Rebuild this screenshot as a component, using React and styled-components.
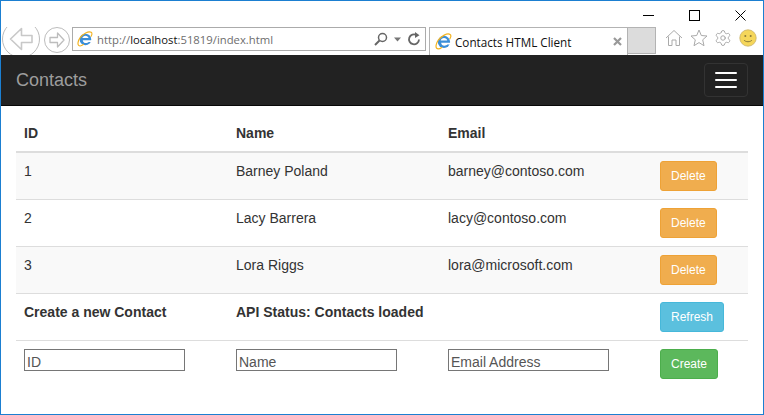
import React from "react";
import styled, { createGlobalStyle } from "styled-components";
import { Settings } from "lucide-react";

const Global = createGlobalStyle`
  html, body { margin: 0; padding: 0; background: #fff; }
  * { box-sizing: border-box; }
`;

const Frame = styled.div`
  width: 764px;
  height: 415px;
  border: 1px solid #1b7fd1;
  background: #fff;
  font-family: "Liberation Sans", Arial, sans-serif;
  font-size: 14px;
  line-height: 20px;
  color: #333;
  overflow: hidden;
  display: flex;
  flex-direction: column;
`;

const Caption = styled.div`
  height: 26px;
  flex: none;
  display: flex;
  justify-content: flex-end;
`;

const CaptionButton = styled.div`
  width: 46px;
  height: 26px;
  padding-top: 2px;
  display: flex;
  align-items: center;
  justify-content: center;
  svg { display: block; }
`;

const Toolbar = styled.div`
  height: 28px;
  flex: none;
  display: flex;
  align-items: flex-start;
  overflow: hidden;
`;

const NavRound = styled.div`
  flex: none;
  border-radius: 50%;
  border: 1px solid #bcbcbc;
  display: flex;
  align-items: center;
  justify-content: center;
  width: ${(p) => p.$size}px;
  height: ${(p) => p.$size}px;
  margin: ${(p) => p.$margin};
  background: #fff;
`;

const AddressBar = styled.div`
  flex: none;
  width: 354px;
  height: 24px;
  margin-left: 2px;
  border: 1px solid #ababab;
  display: flex;
  align-items: center;
  padding: 0 0 0 4px;
  font-size: 11.3px;
  color: #6d6d6d;
  font-family: "Open Sans", "Liberation Sans", sans-serif;
`;

const Url = styled.span`
  margin-left: 4px;
  padding-top: 2px;
  flex: 1;
  b { font-weight: 400; color: #111; }
`;

const AddressIcons = styled.div`
  display: flex;
  align-items: center;
  gap: 6px;
  padding-right: 4px;
`;

const Tab = styled.div`
  flex: none;
  width: 199px;
  height: 28px;
  margin-left: 3px;
  border: 1px solid #b3b3b3;
  border-bottom: none;
  display: flex;
  align-items: center;
  padding: 0 5px 0 5px;
  font-family: "Open Sans", "Liberation Sans", sans-serif;
  font-size: 11.7px;
  color: #111;
`;

const TabLabel = styled.span`
  margin-left: 3px;
  flex: 1;
`;

const TabClose = styled.span`
  display: flex;
`;

const NewTab = styled.div`
  flex: none;
  width: 28px;
  height: 27px;
  background: #dcdcdc;
  border: 1px solid #b3b3b3;
  border-left: none;
`;

const ToolIcons = styled.div`
  display: flex;
  align-items: center;
  gap: 6.5px;
  margin-left: 9px;
  margin-top: 2px;
`;

const Navbar = styled.nav`
  height: 51px;
  flex: none;
  background: #222;
  border-bottom: 1px solid #080808;
  display: flex;
  align-items: center;
  justify-content: space-between;
  padding: 0 15px;
`;

const Brand = styled.a`
  font-size: 18px;
  color: #9d9d9d;
`;

const Burger = styled.button`
  width: 44px;
  height: 34px;
  background: transparent;
  border: 1px solid #333;
  border-radius: 4px;
  padding: 0;
  display: flex;
  flex-direction: column;
  align-items: center;
  justify-content: center;
  gap: 5px;
`;

const BurgerBar = styled.span`
  display: block;
  width: 22px;
  height: 2px;
  background: #fff;
  border-radius: 1px;
`;

const Content = styled.div`
  padding: 8px 15px 0;
`;

const Table = styled.table`
  width: 732px;
  border-collapse: collapse;
  table-layout: fixed;
`;

const Th = styled.th`
  text-align: left;
  font-weight: 700;
  padding: 8px;
  height: 38px;
  border-bottom: 2px solid #ddd;
  vertical-align: bottom;
`;

const Row = styled.tr`
  background: ${(p) => (p.$striped ? "#f9f9f9" : "#fff")};
`;

const Td = styled.td`
  padding: 8px;
  vertical-align: top;
  border-top: ${(p) => (p.$first ? "none" : "1px solid #ddd")};
  font-weight: ${(p) => (p.$bold ? 700 : 400)};
`;

const Button = styled.button`
  display: inline-block;
  font-family: "Liberation Sans", Arial, sans-serif;
  font-size: 12px;
  line-height: 18px;
  padding: 5px 10px;
  height: 30px;
  color: #fff;
  border-radius: 3px;
  border: 1px solid ${(p) => p.$border};
  background: ${(p) => p.$bg};
  vertical-align: top;
`;

const Field = styled.input`
  display: block;
  width: 161px;
  height: 22px;
  padding: 3px 1px 0 2px;
  margin: 0;
  border: 1px solid #767676;
  border-radius: 0;
  background: #fff;
  font-family: "Liberation Sans", Arial, sans-serif;
  font-size: 14px;
  line-height: 18px;
  color: #333;
  outline: none;
  &::placeholder { color: #555; opacity: 1; }
`;

const IeLogo = ({ size = 18 }) => (
  <svg width={size} height={size} viewBox="0 0 18 18" fill="none">
    <circle cx="9.500" cy="9.500" r="6.500" fill="#3b8ed8" />
    <path d="M6 8C6.300 6.300 7.800 5.300 9.500 5.300 11.300 5.300 12.700 6.300 13 8Z" fill="#fff" />
    <path d="M6.500 10.300H16.500V12.300H13C12.500 13 11.200 13.500 10 13.500 8 13.500 6.700 12.200 6.500 10.300Z" fill="#fff" />
    <path d="M3.500 7.500C6.500 3.500 13 -.5 16 1.500 17.500 2.500 16.500 5 15.500 6.500" stroke="#f2b321" strokeWidth="1.300" />
    <path d="M3.500 7.500C1 11 .5 15 1.800 16.200 3 17.300 5.500 16.500 7.500 15" stroke="#f2b321" strokeWidth="1.300" />
  </svg>
);

const BackArrow = () => (
  <svg width="24" height="24" viewBox="0 0 24 24" fill="none" stroke="#c8c8c8" strokeWidth="1.600" strokeLinejoin="round">
    <path d="M1.500 12 12.500 1.500V8.500H23V15.500H12.500V22.500Z" />
  </svg>
);

const ForwardArrow = () => (
  <svg width="16" height="16" viewBox="0 0 16 16" fill="none" stroke="#bdbdbd" strokeWidth="1.300" strokeLinejoin="round">
    <path d="M15 8 8.500 1V5.500H1V10.500H8.500V15Z" />
  </svg>
);

const contacts = [
  { id: 1, name: "Barney Poland", email: "barney@contoso.com" },
  { id: 2, name: "Lacy Barrera", email: "lacy@contoso.com" },
  { id: 3, name: "Lora Riggs", email: "lora@microsoft.com" },
];

export default function App() {
  return (
    <Frame>
      <Global />
      <Caption>
        <CaptionButton>
          <svg width="11" height="11"><path d="M0 5.500H11" stroke="#000" /></svg>
        </CaptionButton>
        <CaptionButton>
          <svg width="11" height="11"><rect x=".5" y=".5" width="10" height="10" fill="none" stroke="#000" /></svg>
        </CaptionButton>
        <CaptionButton>
          <svg width="11" height="11"><path d="M.5 .5 10.500 10.500M10.500 .5 .5 10.500" stroke="#000" /></svg>
        </CaptionButton>
      </Caption>
      <Toolbar>
        <NavRound $size={38} $margin="-7px 0 0 1px"><BackArrow /></NavRound>
        <NavRound $size={26} $margin="0 0 0 4px"><ForwardArrow /></NavRound>
        <AddressBar>
          <IeLogo size={16} />
          <Url>http://<b>localhost</b>:51819/index.html</Url>
          <AddressIcons>
            <svg width="14" height="14" viewBox="0 0 14 14" fill="none" stroke="#666" strokeWidth="1.500">
              <circle cx="8.500" cy="5.500" r="4" /><path d="M5.500 8.500 1 13" strokeWidth="2" />
            </svg>
            <svg width="7" height="14" viewBox="0 0 7 14"><path d="M0 5.500H7L3.500 9.500Z" fill="#777" /></svg>
            <svg width="14" height="14" viewBox="0 0 14 14" fill="none" stroke="#666" strokeWidth="1.800">
              <path d="M12 7.500A5 5 0 1 1 9.500 3" /><path d="M8 0 12.500 3.200 8 6Z" fill="#666" stroke="none" />
            </svg>
          </AddressIcons>
        </AddressBar>
        <Tab>
          <IeLogo size={17} />
          <TabLabel>Contacts HTML Client</TabLabel>
          <TabClose>
            <svg width="9" height="9"><path d="M1 1 8 8M8 1 1 8" stroke="#999" strokeWidth="2.200" /></svg>
          </TabClose>
        </Tab>
        <NewTab />
        <ToolIcons>
          <svg width="18" height="18" viewBox="0 0 18 18" fill="none" stroke="#aaa">
            <path d="M1 9 9 1.500 17 9M3.500 7.500V16.500H7V11H11V16.500H14.500V7.500" />
          </svg>
          <svg width="18" height="18" viewBox="0 0 18 18" fill="none" stroke="#aaa">
            <path d="M9 1 11.300 6.500 17 7 12.700 10.800 14 16.700 9 13.600 4 16.700 5.300 10.800 1 7 6.700 6.500Z" />
          </svg>
          <Settings size={18} color="#a0a0a0" strokeWidth={1.200} />
          <svg width="18" height="18" viewBox="0 0 18 18">
            <circle cx="9" cy="9" r="8.200" fill="#f5d65a" stroke="#c9b36b" strokeWidth=".8" />
            <circle cx="6.300" cy="7" r="1" fill="#8a7a3a" />
            <circle cx="11.700" cy="7" r="1" fill="#8a7a3a" />
            <path d="M5 11C6.500 13.300 11.500 13.300 13 11" fill="none" stroke="#8a7a3a" />
          </svg>
        </ToolIcons>
      </Toolbar>
      <Navbar>
        <Brand>Contacts</Brand>
        <Burger aria-label="Toggle navigation">
          <BurgerBar />
          <BurgerBar />
          <BurgerBar />
        </Burger>
      </Navbar>
      <Content>
        <Table>
          <colgroup>
            <col width="212" /><col width="212" /><col width="212" /><col width="96" />
          </colgroup>
          <thead>
            <tr>
              <Th>ID</Th><Th>Name</Th><Th>Email</Th><Th />
            </tr>
          </thead>
          <tbody>
            {contacts.map((c, i) => (
              <Row key={c.id} $striped={i % 2 === 0}>
                <Td $first={i === 0}>{c.id}</Td>
                <Td $first={i === 0}>{c.name}</Td>
                <Td $first={i === 0}>{c.email}</Td>
                <Td $first={i === 0}><Button $bg="#f0ad4e" $border="#eea236">Delete</Button></Td>
              </Row>
            ))}
            <Row>
              <Td $bold>Create a new Contact</Td>
              <Td $bold colSpan={2}>API Status: Contacts loaded</Td>
              <Td><Button $bg="#5bc0de" $border="#46b8da">Refresh</Button></Td>
            </Row>
            <Row>
              <Td><Field placeholder="ID" /></Td>
              <Td><Field placeholder="Name" /></Td>
              <Td><Field placeholder="Email Address" /></Td>
              <Td><Button $bg="#5cb85c" $border="#4cae4c">Create</Button></Td>
            </Row>
          </tbody>
        </Table>
      </Content>
    </Frame>
  );
}
